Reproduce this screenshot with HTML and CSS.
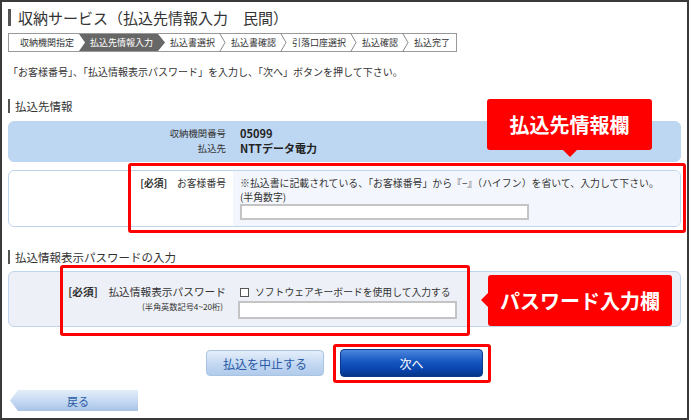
FILE: index.html
```html
<!DOCTYPE html>
<html lang="ja">
<head>
<meta charset="UTF-8">
<link rel="stylesheet" href="styles.css">
<title>収納サービス</title>
</head>
<body>
<div class="frame">
  <h1 class="title">収納サービス（払込先情報入力　民間）</h1>

  <div class="steps">
    <span class="step first">収納機関指定</span>
    <span class="step on">払込先情報入力</span>
    <span class="step">払込書選択</span>
    <svg class="sep" width="7" height="19" viewBox="0 0 7 19"><polyline points="0.5,0 6,9.5 0.5,19" fill="none" stroke="#8a8a8a" stroke-width="1"/></svg>
    <span class="step">払込書確認</span>
    <svg class="sep" width="7" height="19" viewBox="0 0 7 19"><polyline points="0.5,0 6,9.5 0.5,19" fill="none" stroke="#8a8a8a" stroke-width="1"/></svg>
    <span class="step">引落口座選択</span>
    <svg class="sep" width="7" height="19" viewBox="0 0 7 19"><polyline points="0.5,0 6,9.5 0.5,19" fill="none" stroke="#8a8a8a" stroke-width="1"/></svg>
    <span class="step">払込確認</span>
    <svg class="sep" width="7" height="19" viewBox="0 0 7 19"><polyline points="0.5,0 6,9.5 0.5,19" fill="none" stroke="#8a8a8a" stroke-width="1"/></svg>
    <span class="step last">払込完了</span>
  </div>

  <p class="lead">「お客様番号」、「払込情報表示パスワード」を入力し、「次へ」ボタンを押して下さい。</p>

  <h2 class="sec first-sec">払込先情報</h2>
  <div class="panel info">
    <div class="row">
      <div class="lbl">収納機関番号</div>
      <div class="val">05099</div>
    </div>
    <div class="row">
      <div class="lbl">払込先</div>
      <div class="val">NTTデータ電力</div>
    </div>
  </div>

  <div class="panel field">
    <div class="lbl"><b>[必須]</b>　お客様番号</div>
    <div class="fval">
      <div>※払込書に記載されている、「お客様番号」から『−』（ハイフン）を省いて、入力して下さい。</div>
      <div>(半角数字)</div>
      <input class="box num" type="text">
    </div>
  </div>

  <h2 class="sec second-sec">払込情報表示パスワードの入力</h2>
  <div class="panel pass">
    <div class="lbl">
      <div class="big"><b>[必須]</b>　払込情報表示パスワード</div>
      <div class="sub">(半角英数記号4~20桁)</div>
    </div>
    <div class="fval">
      <div class="chk"><span class="cb"></span>ソフトウェアキーボードを使用して入力する</div>
      <input class="box pw" type="password">
    </div>
  </div>

  <div class="buttons">
    <button class="btn cancel">払込を中止する</button>
    <button class="btn next">次へ</button>
  </div>

  <button class="back">戻る</button>

  <div class="mark mark-info"></div>
  <div class="mark mark-pass"></div>
  <div class="mark mark-next"></div>

  <div class="callout down">払込先情報欄</div>
  <div class="callout left">パスワード入力欄</div>
</div>
</body>
</html>
```

FILE: styles.css
```css
body {
  margin: 0;
  font-family: "Noto Sans CJK JP", "Noto Sans", sans-serif;
  color: #333;
}

.frame {
  position: relative;
  width: 689px;
  height: 420px;
  box-sizing: border-box;
  border: 2px solid #3a3a3a;
  padding: 0 6px;
  background: #fff;
  overflow: hidden;
}

.title {
  margin: 7px 0 0 0;
  height: 17px;
  border-left: 3px solid #555;
  padding-left: 7px;
  font-size: 15px;
  line-height: 17px;
  font-weight: normal;
  color: #333;
}

.steps {
  display: flex;
  align-items: center;
  width: fit-content;
  height: 19px;
  box-sizing: border-box;
  margin-top: 7px;
  border: 1px solid #999;
  font-size: 9px;
  line-height: 17px;
  color: #333;
}
.step {
  padding: 0 4px 0 5px;
  white-space: nowrap;
}
.step.first {
  padding: 0 5px 0 11px;
}
.step.on {
  background: #676767;
  color: #fff;
  padding: 0 12px 0 11px;
  clip-path: polygon(0 0, calc(100% - 7px) 0, 100% 50%, calc(100% - 7px) 100%, 0 100%, 6px 50%);
}
.step.last {
  padding-right: 6px;
}
.sep {
  display: block;
  flex: none;
}

.lead {
  margin: 13px 0 0 0;
  font-size: 10px;
  line-height: 14px;
}

.sec {
  margin: 0;
  height: 14px;
  border-left: 2px solid #555;
  padding-left: 5px;
  font-size: 11.5px;
  line-height: 14px;
  font-weight: normal;
}
.first-sec { margin-top: 20px; }
.second-sec { margin-top: 23px; }

.panel {
  box-sizing: border-box;
  border: 1px solid #bfd5ee;
  border-radius: 6px;
  overflow: hidden;
}

.info {
  margin-top: 8px;
  height: 41px;
  padding: 4px 0;
  background: #bdd6f1;
  border-color: #bdd6f1;
}
.row {
  display: grid;
  grid-template-columns: 224px 1fr;
  line-height: 15px;
}
.lbl {
  text-align: right;
  padding-right: 7px;
  font-size: 9.4px;
}
.val {
  padding-left: 7px;
  font-size: 11px;
  font-weight: bold;
  color: #222;
}

.field {
  display: grid;
  grid-template-columns: 224px 1fr;
  margin-top: 8px;
  height: 57px;
  background: #fff;
}
.field .lbl {
  padding-top: 5px;
  line-height: 14px;
  font-size: 9.8px;
}
.fval {
  padding-left: 7px;
  font-size: 9.9px;
  line-height: 14px;
}
.field .fval {
  background: #f3f7fd;
  padding-top: 5px;
}

.box {
  display: block;
  box-sizing: border-box;
  margin: 0;
  border: 2px solid #c4c4c4;
  background: #fff;
  outline: none;
}
.num {
  width: 289px;
  height: 16px;
}

.pass {
  display: grid;
  grid-template-columns: 224px 1fr;
  margin-top: 7px;
  height: 56px;
  padding-top: 13px;
  background: #edf0f6;
}
.pass .lbl {
  line-height: 14px;
}
.big {
  font-size: 10.7px;
}
.sub {
  font-size: 8.2px;
  padding-right: 3px;
}
.chk {
  display: flex;
  align-items: center;
  font-size: 9.8px;
}
.cb {
  width: 7px;
  height: 7px;
  border: 1px solid #555;
  background: #fff;
  margin-right: 6px;
}
.pw {
  margin: 2px 0 0 -2px;
  width: 219px;
  height: 18px;
}

.buttons {
  display: flex;
  justify-content: center;
  align-items: center;
  gap: 16px;
  margin-top: 22px;
  height: 28px;
}
.btn {
  font-family: inherit;
  font-size: 12px;
  border-radius: 4px;
  padding: 0;
}
.cancel {
  width: 118px;
  height: 26px;
  color: #2a5aa6;
  border: 1px solid #a9c3e3;
  background: linear-gradient(#e4eefa, #c3d8f2 55%, #b1cbeb);
}
.next {
  width: 143px;
  height: 28px;
  color: #fff;
  border: 1px solid #0c3a8a;
  background: linear-gradient(#4b86dc, #1556c0 45%, #0a45ad 75%, #053688);
}

.back {
  display: block;
  margin: 13px 0 0 2px;
  width: 128px;
  height: 21px;
  border: none;
  padding: 0 0 0 8px;
  font-family: inherit;
  font-size: 11px;
  color: #2a5aa6;
  background: linear-gradient(#e4eefa, #c3d8f2 55%, #a9c3e6);
  clip-path: polygon(8px 0, 100% 0, 100% 100%, 8px 100%, 0 50%);
}

.mark {
  position: absolute;
  box-sizing: border-box;
  border: 3px solid #f00;
  border-radius: 3px;
}
.mark-info { left: 126px; top: 161px; width: 558px; height: 70px; }
.mark-pass { left: 58px; top: 263px; width: 410px; height: 71px; }
.mark-next { left: 331px; top: 342px; width: 158px; height: 39px; }

.callout {
  position: absolute;
  background: #f00;
  color: #fff;
  border-radius: 3px;
  font-size: 20px;
  font-weight: bold;
  line-height: 51px;
  text-align: center;
  height: 51px;
}
.callout.down { left: 485px; top: 97px; width: 165px; }
.callout.left { left: 486px; top: 273px; width: 184px; }
.callout::after {
  content: "";
  position: absolute;
  border: 7px solid transparent;
}
.callout.down::after {
  left: 76px;
  top: 51px;
  border-top-color: #f00;
}
.callout.left::after {
  left: -14px;
  top: 18px;
  border-right-color: #f00;
}
```
